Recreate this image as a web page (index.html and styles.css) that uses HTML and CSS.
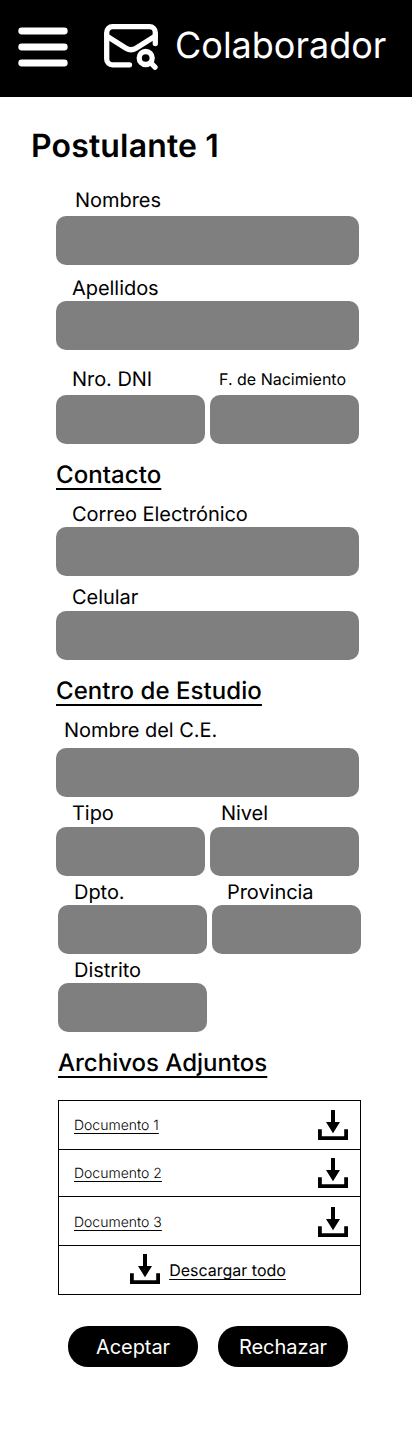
FILE: index.html
```html
<!DOCTYPE html>
<html lang="es">
<head>
<meta charset="utf-8">
<title>Postulante 1</title>
<link rel="stylesheet" href="styles.css">
</head>
<body>
<svg class="defs" aria-hidden="true">
  <symbol id="download" viewBox="0 0 30 30">
    <path d="M13 0h4v12h5l-7 11.300L8 12h5z"/>
    <path d="M0 19.300h3.800v7H26.200v-7H30V30H0z"/>
  </symbol>
</svg>
<header class="topbar">
  <svg class="menu" viewBox="0 0 50 40" width="50" height="40">
    <path d="M3.700 4h42.600M3.700 20h42.600M3.700 36h42.600"/>
  </svg>
  <svg class="mail" viewBox="0 0 54 46" width="54" height="46">
    <path d="M51.300 19.500V8.500a5.800 5.800 0 0 0-5.800-5.800H8.500A5.800 5.800 0 0 0 2.700 8.500V35a5.800 5.800 0 0 0 5.800 5.800H25.500"/>
    <path d="M3 12.200L22 24.200Q27 27.300 32 24.200L51 12.200"/>
    <circle cx="41.700" cy="34" r="6.500"/>
    <path d="M46.500 38.700L51 43.200"/>
  </svg>
  <span class="role">Colaborador</span>
</header>
<main>
  <h1>Postulante 1</h1>
  <form class="form">
    <div class="field names"><label>Nombres</label><div class="input"></div></div>
    <div class="field surnames"><label>Apellidos</label><div class="input"></div></div>
    <div class="row identity">
      <div class="field"><label>Nro. DNI</label><div class="input"></div></div>
      <div class="field"><label class="small">F. de Nacimiento</label><div class="input"></div></div>
    </div>
    <h2>Contacto</h2>
    <div class="field email"><label>Correo Electrónico</label><div class="input"></div></div>
    <div class="field phone"><label>Celular</label><div class="input"></div></div>
    <h2>Centro de Estudio</h2>
    <div class="field school"><label>Nombre del C.E.</label><div class="input"></div></div>
    <div class="row kind">
      <div class="field"><label>Tipo</label><div class="input"></div></div>
      <div class="field level"><label>Nivel</label><div class="input"></div></div>
    </div>
    <div class="place">
      <div class="row">
        <div class="field"><label>Dpto.</label><div class="input"></div></div>
        <div class="field province"><label>Provincia</label><div class="input"></div></div>
      </div>
      <div class="row">
        <div class="field"><label>Distrito</label><div class="input"></div></div>
      </div>
      <h2>Archivos Adjuntos</h2>
    </div>
  </form>
  <div class="files">
    <div class="file first"><a>Documento 1</a><svg class="dl"><use href="#download"/></svg></div>
    <div class="file second"><a>Documento 2</a><svg class="dl"><use href="#download"/></svg></div>
    <div class="file third"><a>Documento 3</a><svg class="dl"><use href="#download"/></svg></div>
    <div class="file all"><svg class="dl"><use href="#download"/></svg><a>Descargar todo</a></div>
  </div>
  <div class="actions">
    <button type="button">Aceptar</button>
    <button type="button">Rechazar</button>
  </div>
</main>
</body>
</html>
```
FILE: styles.css
```css
* { box-sizing: border-box; }
body {
  margin: 0;
  min-height: 1431px;
  background: #fff;
  color: #000;
  font-family: Inter, "Liberation Sans", sans-serif;
  text-rendering: geometricPrecision;
}
.defs { display: none; }
.topbar {
  display: flex;
  height: 97px;
  padding-left: 18px;
  background: #000;
  color: #fff;
}
.topbar svg { fill: none; stroke: #fff; stroke-linecap: round; stroke-linejoin: round; }
.menu { margin-top: 27px; stroke-width: 6.800; }
.mail { margin: 24px 0 0 36px; stroke-width: 5.300; }
.role { margin: 23px 0 0 17px; font-size: 36px; line-height: 44px; font-weight: 400; }
h1 { margin: 29px 0 0 31px; font-size: 32px; line-height: 39px; font-weight: 600; letter-spacing: 0.150px; }
.form { width: 303px; margin: 23px 0 0 56px; }
h2 {
  margin: 16px 0 13px;
  font-size: 24px;
  line-height: 29px;
  font-weight: 500;
  letter-spacing: 0.070px;
  text-decoration: underline;
  text-decoration-thickness: 1.500px;
  text-underline-offset: 5px;
}
.place h2 { letter-spacing: 0; }
.field { display: flex; flex-direction: column; width: 100%; }
.row { display: grid; grid-template-columns: 149px 149px; gap: 5px; }
label { padding-left: 16px; font-size: 20px; line-height: 24px; margin-bottom: 2px; font-weight: 400; letter-spacing: -0.050px; white-space: nowrap; }
.input { height: 49px; border-radius: 10px; background: #7f7f7f; }
.names label { padding-left: 19px; margin-bottom: 4px; }
.surnames { margin-top: 11px; }
.surnames label { margin-bottom: 1px; }
.identity { margin-top: 17px; }
.identity label { margin-bottom: 4px; }
.identity .small { padding-left: 9px; font-size: 16px; letter-spacing: 0; }
.email label { margin-bottom: 1px; }
.phone { margin-top: 9px; }
.school label { padding-left: 8px; margin-bottom: 6px; }
.kind { margin-top: 4px; }
.level label { padding-left: 11px; }
.place { margin-left: 2px; }
.place .row { margin-top: 4px; }
.place .row label { margin-bottom: 1px; }
.place .province label { padding-left: 15px; }
.files { width: 303px; margin: 23px 0 0 58px; border: 1px solid #000; }
.file {
  display: flex;
  justify-content: space-between;
  align-items: center;
  height: 49px;
  padding: 0 12px 0 15px;
  border-bottom: 1px solid #000;
  font-size: 14px;
  font-weight: 300;
}
.file a { text-decoration: underline; text-underline-offset: 3px; }
.first a { padding-top: 1px; }
.file.second { height: 47px; }
.file.third { padding-top: 2px; }
.file.all { height: 48px; justify-content: center; gap: 9px; padding: 0 16px 2px 13px; border: 0; font-size: 16px; font-weight: 400; }
.file.all a { padding-top: 2px; }
.dl { width: 30px; height: 30px; }
.actions { display: flex; gap: 20px; margin: 31px 0 0 68px; }
button {
  width: 130px;
  height: 41px;
  padding: 0;
  border: 0;
  border-radius: 20px;
  background: #000;
  color: #fff;
  font: 400 20px/24px Inter, "Liberation Sans", sans-serif;
  letter-spacing: -0.050px;
}
```
